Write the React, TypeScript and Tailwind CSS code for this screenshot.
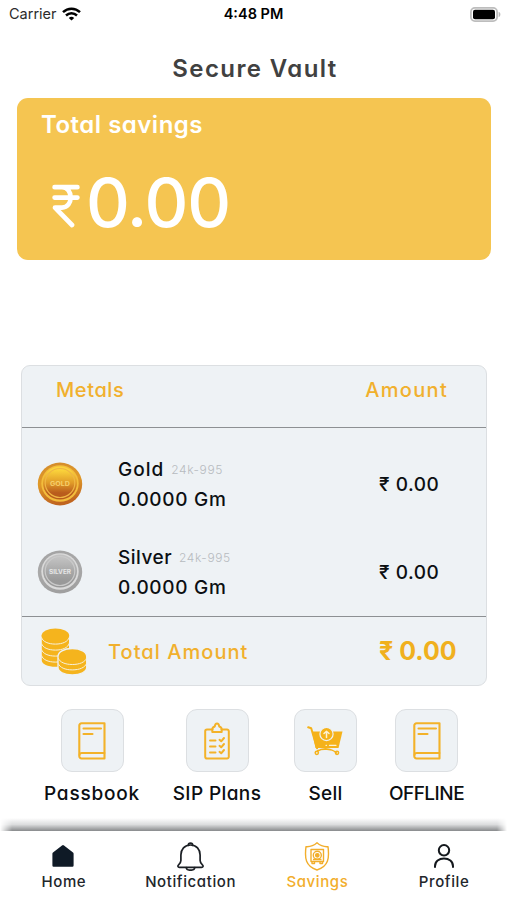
import type { ReactNode } from 'react';

function WifiIcon() {
  return (
    <svg width="19" height="14" viewBox="0 0 19 14" fill="none" stroke="#000" strokeWidth="2.5">
      <path d="M1 5.2C5.8.6 13.2.6 18 5.2" />
      <path d="M4 8.5c3.2-3 7.8-3 11 0" />
      <path d="M6.8 10.9c1.6-1.500 3.8-1.500 5.400 0L9.500 13.600z" fill="#000" stroke="none" />
    </svg>
  );
}

function BatteryIcon() {
  return (
    <svg width="31" height="15" viewBox="0 0 31 15">
      <rect x="0.9" y="0.9" width="26.2" height="13.2" rx="4" fill="#fff" stroke="#bdbdbd" strokeWidth="1.8" />
      <rect x="3" y="2.8" width="22" height="9.4" rx="2" fill="#000" />
      <path d="M28.6 4.8c2.4.9 2.4 4.500 0 5.400z" fill="#b9b9b9" />
    </svg>
  );
}

function RupeeIcon() {
  return (
    <svg width="28" height="44" viewBox="0 0 28 44" fill="none" stroke="#fff" strokeWidth="4.700" strokeLinecap="round" strokeLinejoin="round">
      <path d="M2.600 3.200h22.800M2.600 13.600h22.800M3 3.200h7c11.500 0 11.500 20.400 0 20.400H3L20 41" />
    </svg>
  );
}

function Coin({ kind }: { kind: 'gold' | 'silver' }) {
  const gold = kind === 'gold';
  const c = gold
    ? { rimTop: '#d28a2c', rimLow: '#c0651f', ring: '#f3bd3c', faceTop: '#fbd53c', faceMid: '#e09a28', faceLow: '#b95c1c', glint: '#efb544' }
    : { rimTop: '#a3a3a3', rimLow: '#a0a0a0', ring: '#dadada', faceTop: '#c2c2c2', faceMid: '#a9a9a9', faceLow: '#999999', glint: '#c9c9c9' };
  return (
    <svg width="46" height="44" viewBox="0 0 46 44">
      <defs>
        <linearGradient id={`${kind}-rim`} x1="0" y1="0" x2="0.2" y2="1">
          <stop offset="0" stopColor={c.rimTop} />
          <stop offset="0.5" stopColor={c.faceMid} />
          <stop offset="1" stopColor={c.rimLow} />
        </linearGradient>
        <linearGradient id={`${kind}-face`} x1="0" y1="0" x2="0" y2="1">
          <stop offset="0.1" stopColor={c.faceTop} />
          <stop offset="0.5" stopColor={c.faceMid} />
          <stop offset="0.8" stopColor={c.faceLow} />
        </linearGradient>
      </defs>
      <ellipse cx="23" cy="22" rx="22.200" ry="21.500" fill={`url(#${kind}-rim)`} />
      <ellipse cx="23" cy="21.500" rx="18.700" ry="18.300" fill={c.ring} />
      <ellipse cx="23" cy="21" rx="17" ry="16.500" fill={`url(#${kind}-face)`} />
      <ellipse cx="23" cy="21" rx="14.800" ry="14.500" fill="none" stroke={c.glint} strokeWidth="1.200" />
      <text
        x="23"
        y="23.500"
        textAnchor="middle"
        textLength={gold ? 20 : 22}
        lengthAdjust="spacingAndGlyphs"
        className="font-bold"
        fontSize={gold ? 6.5 : 5.5}
        fill={gold ? '#f6cf6b' : '#e6e6e6'}
      >
        {gold ? 'GOLD' : 'SILVER'}
      </text>
    </svg>
  );
}

function CoinsIcon() {
  return (
    <svg width="46" height="48" viewBox="0 0 46 48" fill="#f5b41d" stroke="#f7f0da" strokeWidth="1">
      <path d="M.8 7v25.500c0 3.600 6 6.300 13.700 6.300S28 36 28 32.500V7z" stroke="none" />
      <ellipse cx="14.400" cy="7.700" rx="13.800" ry="7.300" stroke="none" />
      <path
        d="M.6 9.500c1 4 6.500 6.600 13.800 6.600S27.200 13.500 28 9.500M.6 15.500c1 4 6.500 6.600 13.800 6.600S27.200 19.500 28 15.500M.6 21.500c1 4 6.500 6.600 13.800 6.600S27.200 25.500 28 21.500M.6 27.500c1 4 6.500 6.600 13.800 6.600S27.200 31.500 28 27.500"
        fill="none"
      />
      <path d="M17 28.500c0-4.500 6-8 14.300-8s14.400 3.500 14.400 8v10.800c0 4.300-6 7.700-14.400 7.700S17 43.600 17 39.300z" stroke="#eef2f5" strokeWidth="1.300" />
      <path d="M17.300 30.200c1.400 4 6.800 6.300 14 6.300s12.800-2.300 14.200-6.300M17.300 35.500c1.400 4 6.800 6.400 14 6.400s12.800-2.400 14.200-6.400" fill="none" />
    </svg>
  );
}

function BookIcon() {
  return (
    <svg width="28" height="38" viewBox="0 0 28 38" fill="none" stroke="#f3b229" strokeWidth="2.100" strokeLinecap="round" strokeLinejoin="round">
      <path d="M26.500 36.500H3.500a2.200 2.200 0 0 1-2.200-2.200V3.500a2.200 2.200 0 0 1 2.200-2.200h23z" />
      <path d="M1.500 33c0-1.500 1-2 2.300-2h22.700" strokeWidth="1.800" />
      <path d="M5.500 6.500h17.500M5.500 12h9" />
    </svg>
  );
}

function ClipboardIcon() {
  return (
    <svg width="26" height="38" viewBox="0 0 26 38" fill="none" stroke="#f3b229" strokeWidth="2" strokeLinecap="round" strokeLinejoin="round">
      <path d="M8.500 7.500H3A1.800 1.800 0 0 0 1.200 9.300v25.400A1.800 1.800 0 0 0 3 36.500h20a1.800 1.800 0 0 0 1.800-1.800V9.300A1.800 1.800 0 0 0 23 7.500h-5.500" />
      <path d="M8.300 10V7.500c0-1.500.8-2.500 2.500-3C11 2.500 11.700 1.500 13 1.500s2 1 2.200 3c1.700.5 2.500 1.500 2.500 3V10z" />
      <path d="M6 18.500h5.500M6 24.500h5.500M6 30.500h5.500" />
      <path d="M15.500 17.800l1.700 1.500 2.800-3.300M15.500 23.800l1.700 1.500 2.800-3.300M15.500 29.800l1.700 1.500 2.800-3.300" />
    </svg>
  );
}

function CartIcon() {
  return (
    <svg width="37" height="30" viewBox="0 0 37 30" fill="none" stroke="#f5b21a" strokeLinecap="round" strokeLinejoin="round">
      <path d="M5 5.500h30.500l-4 16.500h-23z" fill="#f5b21a" stroke="none" />
      <path d="M1.200 1.300l3 1 5.800 20" strokeWidth="2" />
      <path d="M29.500 27C25 22.500 16 21 10 25.500M10.500 24.500c5-2 14-1.500 18.500 1.500" strokeWidth="1.300" />
      <circle cx="9.800" cy="26.800" r="1.600" strokeWidth="1.500" />
      <circle cx="30" cy="26.800" r="1.600" strokeWidth="1.500" />
      <circle cx="19.500" cy="8" r="6.600" fill="#f5b21a" stroke="#eef2f5" strokeWidth="1.200" />
      <path d="M19.500 11.500V5.500M17 7.500l2.500-2.300L22 7.500" stroke="#fdf3d6" strokeWidth="1.500" />
      <path d="M19 19.300h.5M22.500 19.300h6.500" stroke="#fdf3d6" strokeWidth="1.300" />
    </svg>
  );
}

function HomeIcon() {
  return (
    <svg width="22" height="22" viewBox="0 0 22 22" fill="#0f1a26">
      <path d="M10 .5a1.500 1.500 0 0 1 2 0l9 7a1.600 1.600 0 0 1 .6 1.300V20.500a1.200 1.200 0 0 1-1.200 1.200H1.600A1.200 1.200 0 0 1 .4 20.500V8.800A1.600 1.600 0 0 1 1 7.500z" />
    </svg>
  );
}

function BellIcon() {
  return (
    <svg width="27" height="29" viewBox="0 0 27 29" fill="none" stroke="#1b1f24" strokeWidth="1.700" strokeLinecap="round" strokeLinejoin="round">
      <path d="M11.300 3.300a2.200 2.200 0 1 1 4.400 0" />
      <path d="M13.500 3C7.500 3 3.900 7.500 3.900 13v5.500c0 2-.8 3-2.300 4.300-1.200 1.100-.7 2.500.8 2.500h22.200c1.500 0 2-1.400.8-2.500-1.500-1.300-2.300-2.300-2.300-4.300V13c0-5.500-3.600-10-9.600-10z" />
      <path d="M9.200 25.500c.3 3.600 8.300 3.600 8.600 0" />
    </svg>
  );
}

function VaultIcon() {
  return (
    <svg width="26" height="29" viewBox="0 0 26 29" fill="none" stroke="#f2ae2c" strokeWidth="1.400" strokeLinejoin="round">
      <path d="M13 .8c2.800 2.600 6.500 4.200 11 3.900 1.500 11.500.5 19.500-11 23.300C1.500 24.200.5 16.200 2 4.700 6.500 5 10.200 3.400 13 .8z" />
      <path d="M7 7.500h12.500v12H7z" />
      <circle cx="13.300" cy="13.300" r="4" />
      <circle cx="13.300" cy="13.300" r="1.700" fill="#f2ae2c" />
      <path d="M9 17.500h8.500M8 19.500v2h2.500v-2M16 19.500v2h2.500v-2" />
    </svg>
  );
}

function ProfileIcon() {
  return (
    <svg width="20" height="24" viewBox="0 0 20 24" fill="none" stroke="#14181d" strokeWidth="2" strokeLinecap="round">
      <circle cx="10" cy="6.300" r="5.200" />
      <path d="M1 23v-.7c0-4.900 4-7.800 9-7.800s9 2.900 9 7.800v.7" />
    </svg>
  );
}

type MetalRowProps = {
  kind: 'gold' | 'silver';
  name: string;
  nameClass: string;
};

function MetalRow({ kind, name, nameClass }: MetalRowProps) {
  return (
    <div className="flex h-[88px] items-center pl-[15px] text-[19px] font-medium text-[#0c0f12]">
      <Coin kind={kind} />
      <div className="mt-[3px] ml-[35px] w-[261px]">
        <div className="flex h-[29px] items-center gap-[7px]">
          <span className={nameClass}>{name}</span>
          <span className="-mt-px text-[12px] font-light tracking-[0.6px] text-[#b7bbbf]">24k-995</span>
        </div>
        <div className="flex h-[30px] items-center tracking-[0.7px]">0.0000 Gm</div>
      </div>
      <div className="mt-[2px] tracking-[0.55px]">₹ 0.00</div>
    </div>
  );
}

type ActionProps = {
  label: string;
  className: string;
  children: ReactNode;
};

function Action({ label, className, children }: ActionProps) {
  return (
    <button className={`flex flex-col items-center ${className}`}>
      <span className="flex size-[63px] items-center justify-center rounded-[11px] border border-[#dcdfe2] bg-[#eef2f5]">
        {children}
      </span>
      <span className="mt-[11px] text-[19px] leading-[22px] font-medium whitespace-nowrap text-[#0c0f12]">{label}</span>
    </button>
  );
}

type TabProps = {
  label: string;
  className?: string;
  children: ReactNode;
};

function Tab({ label, className = '', children }: TabProps) {
  return (
    <button className={`flex flex-1 flex-col items-center text-[15px] font-medium tracking-[0.6px] ${className}`}>
      <span className="mt-[9px] flex h-8 items-center">{children}</span>
      <span className="pl-px leading-[19px]">{label}</span>
    </button>
  );
}

export default function App() {
  return (
    <div className="flex h-[900px] w-[507px] flex-col overflow-hidden bg-white font-['Inter','Liberation_Sans',sans-serif] [font-feature-settings:'cv11']">
      <header className="grid h-7 grid-cols-3 items-center pr-[6px] pl-[9px] text-[14.5px] text-[#2b2b2b]">
        <div className="flex items-center gap-[5px] [font-feature-settings:normal]">
          Carrier
          <WifiIcon />
        </div>
        <div className="-ml-[3px] text-center font-semibold whitespace-nowrap text-black">4:48 PM</div>
        <div className="flex justify-end">
          <BatteryIcon />
        </div>
      </header>

      <h1 className="mt-[25px] pl-[3px] text-center text-[24px] leading-8 font-semibold tracking-[1.4px] text-[#414141]">Secure Vault</h1>

      <section className="mx-[17px] mt-[13px] h-[162px] w-[474px] rounded-[11px] bg-[#f5c551] pl-6 text-white">
        <h2 className="pt-3 text-[24px] leading-[30px] font-semibold tracking-[0.5px]">Total savings</h2>
        <div className="mt-[26px] flex h-[72px] items-center gap-[6px] pl-[11px]">
          <span className="pt-2">
            <RupeeIcon />
          </span>
          <span className="text-[68px] leading-none font-medium tracking-[-1.2px]">0.00</span>
        </div>
      </section>

      <section className="mx-[21px] mt-[105px] h-[321px] w-[466px] shrink-0 rounded-[9px] border border-[#dcdfe2] bg-[#eef2f5]">
        <div className="flex h-[62px] items-center justify-between border-b border-[#8d9093] pr-[38px] pb-[13px] pl-[34px] text-[20px] font-medium text-[#f1b02d]">
          <span className="tracking-[0.6px]">Metals</span>
          <span className="tracking-[1.3px]">Amount</span>
        </div>
        <div className="border-b border-[#8d9093] pt-3">
          <MetalRow kind="gold" name="Gold" nameClass="tracking-[1px]" />
          <MetalRow kind="silver" name="Silver" nameClass="tracking-[0.5px]" />
        </div>
        <div className="flex h-[68px] items-center pt-px pl-[19px] font-medium text-[#f1b02d]">
          <CoinsIcon />
          <span className="ml-[21px] w-[271px] text-[20px] tracking-[1.05px]">Total Amount</span>
          <span className="pt-px text-[25px] font-bold text-[#f0b01e]">₹ 0.00</span>
        </div>
      </section>

      <nav className="mt-[23px] flex gap-8 pl-11">
        <Action label="Passbook" className="w-24 tracking-[0.8px]">
          <BookIcon />
        </Action>
        <Action label="SIP Plans" className="w-[90px] tracking-[0.4px]">
          <ClipboardIcon />
        </Action>
        <Action label="Sell" className="w-[63px] tracking-[0.3px]">
          <CartIcon />
        </Action>
        <Action label="OFFLINE" className="w-[75px] tracking-[-0.5px]">
          <BookIcon />
        </Action>
      </nav>

      <footer className="mt-auto">
        <div className="h-[13px] bg-linear-to-b from-white via-[#dcddde] to-[#888a8c] [mask-image:linear-gradient(to_right,transparent,#000_12px,#000_497px,transparent)]" />
        <div className="flex h-[69px] bg-white text-[#22262b]">
          <Tab label="Home">
            <HomeIcon />
          </Tab>
          <Tab label="Notification">
            <BellIcon />
          </Tab>
          <Tab label="Savings" className="text-[#f2ae2c]">
            <VaultIcon />
          </Tab>
          <Tab label="Profile">
            <ProfileIcon />
          </Tab>
        </div>
      </footer>
    </div>
  );
}
